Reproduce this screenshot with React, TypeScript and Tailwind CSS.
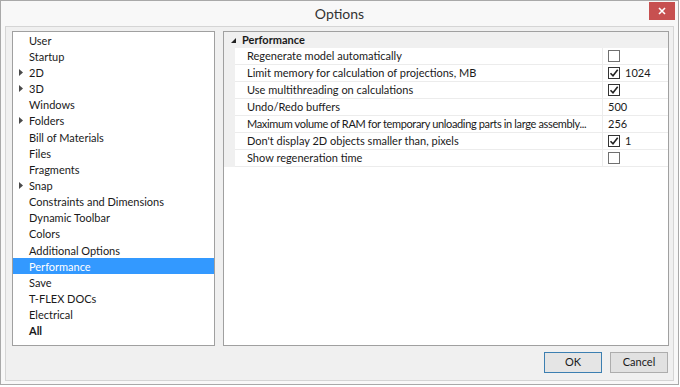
import React from 'react';

const navItems: { label: string; arrow?: boolean; bold?: boolean }[] = [
  { label: 'User' },
  { label: 'Startup' },
  { label: '2D', arrow: true },
  { label: '3D', arrow: true },
  { label: 'Windows' },
  { label: 'Folders', arrow: true },
  { label: 'Bill of Materials' },
  { label: 'Files' },
  { label: 'Fragments' },
  { label: 'Snap', arrow: true },
  { label: 'Constraints and Dimensions' },
  { label: 'Dynamic Toolbar' },
  { label: 'Colors' },
  { label: 'Additional Options' },
  { label: 'Performance' },
  { label: 'Save' },
  { label: 'T-FLEX DOCs' },
  { label: 'Electrical' },
  { label: 'All', bold: true },
];

const props: { name: string; check?: boolean; checked?: boolean; value?: string; tight?: boolean }[] = [
  { name: 'Regenerate model automatically', check: true, checked: false },
  { name: 'Limit memory for calculation of projections, MB', check: true, checked: true, value: '1024' },
  { name: 'Use multithreading on calculations', check: true, checked: true },
  { name: 'Undo/Redo buffers', value: '500' },
  { name: 'Maximum volume of RAM for temporary unloading parts in large assembly...', value: '256', tight: true },
  { name: "Don't display 2D objects smaller than, pixels", check: true, checked: true, value: '1' },
  { name: 'Show regeneration time', check: true, checked: false },
];

const CheckBox = ({ checked }: { checked?: boolean }) => (
  <div
    className={`w-[12px] h-[12px] border bg-white flex items-center justify-center shrink-0 ${
      checked ? 'border-[#333333]' : 'border-[#707070]'
    }`}
  >
    {checked && (
      <svg width="10" height="10" viewBox="0 0 10 10">
        <path d="M1.5 5.2 L4 7.8 L8.7 1.8" fill="none" stroke="#222" strokeWidth="1.6" />
      </svg>
    )}
  </div>
);

const App: React.FC = () => {
  return (
    <div className="w-[680px] h-[387px] bg-white font-['Lato',sans-serif] text-[11px] text-[#1a1a1a]">
      <div className="w-[679px] h-[385px] border border-[#a9a9a9] bg-[#f8f8f8] flex flex-col px-[4px] pb-[3px]">
        {/* title bar */}
        <div className="h-[25px] grid grid-cols-[1fr_auto_1fr] items-start">
          <div />
          <div className="text-[14px] text-[#333333] pt-[4px] leading-[18px]">Options</div>
          <div className="flex justify-end pt-[1px] -mr-[1px]">
            <div className="w-[26px] h-[18px] bg-[#c75050] flex items-center justify-center">
              <svg width="8" height="8" viewBox="0 0 8 8">
                <path d="M1 1 L7 7 M7 1 L1 7" stroke="#fff" strokeWidth="1.6" />
              </svg>
            </div>
          </div>
        </div>

        {/* client */}
        <div className="flex-1 bg-[#f0f0f0] border border-[#d5d5d5] flex flex-col pt-[4px] pl-[6px] pr-[4px] pb-[7px]">
          <div className="flex gap-[8px] h-[315px]">
            {/* left list */}
            <div className="w-[203px] h-full border border-[#a0a0a0] bg-white">
              {navItems.map((it) => {
                const sel = it.label === 'Performance';
                return (
                  <div
                    key={it.label}
                    className={`h-[16.17px] flex items-center leading-none ${
                      sel ? 'bg-[#3399ff] text-white' : ''
                    }`}
                  >
                    <div className="w-[16px] pl-[6px] flex items-center">
                      {it.arrow && (
                        <svg width="4" height="7" viewBox="0 0 4 7">
                          <path d="M0 0 L4 3.5 L0 7 Z" fill="#4a4a4a" />
                        </svg>
                      )}
                    </div>
                    <span className={it.bold ? 'font-bold' : ''}>{it.label}</span>
                  </div>
                );
              })}
            </div>

            {/* right property grid */}
            <div className="w-[446px] h-full border border-[#a0a0a0] bg-white">
              <div className="h-[16px] bg-[#f0f0f0] flex items-center">
                <div className="w-[18px] pl-[7px] flex items-center">
                  <svg width="5" height="5" viewBox="0 0 5 5">
                    <path d="M5 0 L5 5 L0 5 Z" fill="#222" />
                  </svg>
                </div>
                <span className="font-bold">Performance</span>
              </div>
              {props.map((p) => (
                <div key={p.name} className="h-[17px] flex">
                  <div className="w-[11px] bg-[#f0f0f0]" />
                  <div className="flex-1 flex border-b border-[#ececec]">
                    <div
                      className={`w-[368px] pl-[12px] flex items-center border-r border-[#ececec] whitespace-nowrap overflow-hidden ${
                        p.tight ? 'tracking-[-0.35px]' : ''
                      }`}
                    >
                      {p.name}
                    </div>
                    <div className="flex-1 flex items-center gap-[5px] pl-[5px]">
                      {p.check && <CheckBox checked={p.checked} />}
                      {p.value && <span>{p.value}</span>}
                    </div>
                  </div>
                </div>
              ))}
            </div>
          </div>

          <div className="flex-1" />
          <div className="flex justify-end gap-[8px] pr-[1px]">
            <button className="w-[58px] h-[21px] border border-[#3c7fb1] bg-[#e5e5e5] text-[11px] text-[#1a1a1a]">
              OK
            </button>
            <button className="w-[58px] h-[21px] border border-[#adadad] bg-[#e1e1e1] text-[11px] text-[#1a1a1a]">
              Cancel
            </button>
          </div>
        </div>
      </div>
    </div>
  );
};

export default App;
